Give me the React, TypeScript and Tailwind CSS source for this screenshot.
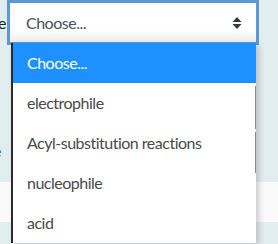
import React from 'react';

const options = ['Choose...', 'electrophile', 'Acyl-substitution reactions', 'nucleophile', 'acid'];

const SortIcon = () => (
  <svg width="10" height="12" viewBox="0 0 10 12" className="text-[#343a40]">
    <path d="M5 0 L9.5 5 H0.5 Z" fill="currentColor" />
    <path d="M5 12 L9.5 7 H0.5 Z" fill="currentColor" />
  </svg>
);

const App: React.FC = () => {
  return (
    <div
      className="relative w-[278px] h-[244px] overflow-hidden bg-[#e2edf0]"
      style={{ fontFamily: 'Lato, "Open Sans", sans-serif' }}
    >
      {/* page behind the open select */}
      <div className="flex flex-col">
        <div className="h-[182px] text-[16px] leading-none">
          <div className="h-[45px] flex items-center -ml-[2px] text-[#1d2125]">e</div>
          <div className="mt-[98px] -ml-[7px] text-[#0f6cbf]">e</div>
        </div>
        <div className="h-[40px] bg-[#fafafa]" />
        <div className="h-[22px]" />
      </div>

      {/* select box with focus ring */}
      <div className="absolute left-[7px] top-0 w-[252px] h-[45px] border-[3px] border-[#5a99d6] bg-gradient-to-b from-white from-70% to-[#ececec]">
        <div className="flex h-full items-center justify-between pl-[16px] pr-[14px]">
          <span className="text-[16px] tracking-[-0.5px] text-[#495057]">Choose...</span>
          <SortIcon />
        </div>
      </div>

      {/* open option list */}
      <div className="absolute left-[11px] top-[43px] w-[245px] border-l-2 border-[#2a2a2a] bg-white shadow-[3px_2px_6px_rgba(0,0,0,0.18)]">
        {options.map((opt, i) => (
          <div
            key={opt}
            className={`h-[40px] flex items-center pl-[14px] text-[16px] tracking-[-0.5px] ${
              i === 0 ? 'bg-[#1e90ff] text-white' : 'text-[#4a4a4a]'
            }`}
          >
            {opt}
          </div>
        ))}
        <div className="absolute right-0 top-[43px] w-px h-[43px] bg-[#8a8a8a]" />
        <div className="absolute right-0 top-[89px] w-px h-[41px] bg-[#8a8a8a]" />
      </div>
    </div>
  );
};

export default App;
